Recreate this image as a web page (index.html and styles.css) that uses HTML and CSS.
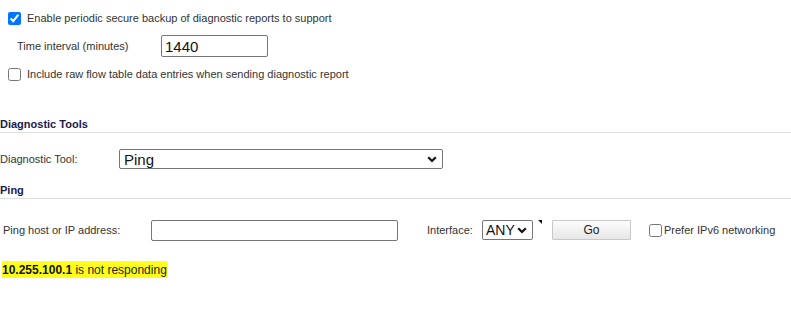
FILE: index.html
```html
<!DOCTYPE html>
<html lang="en">
<head>
    <meta charset="UTF-8">
    <meta name="viewport" content="width=device-width, initial-scale=1.0">
    <title>Diagnostics</title>
    <link rel="stylesheet" href="styles.css">
</head>
<body>
    <div class="backup">
        <label class="check-row">
            <input type="checkbox" checked>
            <span>Enable periodic secure backup of diagnostic reports to support</span>
        </label>
        <div class="field-row">
            <span class="interval-label">Time interval (minutes)</span>
            <input type="text" class="interval" value="1440">
        </div>
        <label class="check-row">
            <input type="checkbox">
            <span>Include raw flow table data entries when sending diagnostic report</span>
        </label>
    </div>

    <h2 class="section">Diagnostic Tools</h2>
    <div class="tool-row">
        <span class="tool-label">Diagnostic Tool:</span>
        <select class="tool-select">
            <option>Ping</option>
            <option>Trace Route</option>
            <option>DNS Name Lookup</option>
        </select>
    </div>

    <h2 class="section ping-title">Ping</h2>
    <div class="ping-row">
        <span class="host-label">Ping host or IP address:</span>
        <input type="text" class="host">
        <span class="iface-label">Interface:</span>
        <select class="iface">
            <option>ANY</option>
            <option>X0</option>
            <option>X1</option>
        </select>
        <span class="mark"></span>
        <button class="go-btn">Go</button>
        <label class="ipv6">
            <input type="checkbox">
            <span>Prefer IPv6 networking</span>
        </label>
    </div>

    <div class="result">
        <span class="highlight"><b>10.255.100.1</b> is not responding</span>
    </div>
</body>
</html>
```

FILE: styles.css
```css
/* General Styling */
body {
    margin: 0;
    font-family: "Liberation Sans", Arial, sans-serif;
    font-size: 11px;
    color: #333;
    background: white;
}

input[type="checkbox"] {
    width: 13px;
    height: 13px;
    margin: 0;
}

/* Backup settings */
.backup {
    padding-top: 4px;
}

.check-row {
    display: flex;
    align-items: center;
    height: 28px;
    padding-left: 8px;
    gap: 6px;
}

.field-row {
    display: flex;
    align-items: center;
    height: 28px;
}

.interval-label {
    width: 144px;
    padding-left: 17px;
}

.interval {
    width: 107px;
    height: 22px;
    box-sizing: border-box;
    border: 1px solid #767676;
    border-radius: 2px;
    padding: 0 3px;
    font-family: "Liberation Sans", Arial, sans-serif;
    font-size: 15px;
    color: #111;
}

/* Section headings */
.section {
    margin: 29px 0 0;
    font-size: 11px;
    line-height: 15px;
    font-weight: bold;
    color: #1b1b4d;
    border-bottom: 1px solid #dedede;
}

.ping-title {
    margin-top: 14px;
}

.tool-row {
    display: flex;
    align-items: center;
    height: 20px;
    margin-top: 16px;
}

.tool-label {
    width: 119px;
}

.tool-select,
.iface {
    height: 20px;
    box-sizing: border-box;
    border: 1px solid #767676;
    border-radius: 2px;
    font-family: "Liberation Sans", Arial, sans-serif;
    font-size: 15px;
    color: #111;
    background: white url("data:image/svg+xml,%3Csvg xmlns='http://www.w3.org/2000/svg' width='10' height='7' viewBox='0 0 10 7'%3E%3Cpath d='M1.2 1.2 L5 5 L8.8 1.2' fill='none' stroke='%23111' stroke-width='2.2'/%3E%3C/svg%3E") no-repeat right 5px center;
    appearance: none;
    -webkit-appearance: none;
    padding: 0 0 0 4px;
}

.tool-select {
    width: 324px;
    padding-left: 4px;
}

/* Ping row */
.ping-row {
    display: flex;
    align-items: center;
    height: 22px;
    margin-top: 20px;
}

.host-label {
    width: 148px;
    padding-left: 3px;
}

.host {
    width: 247px;
    height: 21px;
    box-sizing: border-box;
    border: 1px solid #767676;
    border-radius: 2px;
}

.iface-label {
    margin-left: 29px;
    width: 55px;
}

.iface {
    width: 51px;
    padding-left: 3px;
    font-size: 14px;
    background-position: right 5px center;
}

.mark {
    align-self: flex-start;
    margin: 1px 0 0 5px;
    width: 0;
    height: 0;
    border-top: 4px solid #111;
    border-left: 4px solid transparent;
}

.go-btn {
    margin-left: 10px;
    width: 79px;
    height: 20px;
    border: 1px solid #c8c8c8;
    border-radius: 1px;
    background: linear-gradient(#fdfdfd, #e6e6e6);
    font-family: "Liberation Sans", Arial, sans-serif;
    font-size: 12px;
    color: #222;
}

.ipv6 {
    display: flex;
    align-items: center;
    margin-left: 18px;
    gap: 2px;
}

/* Result */
.result {
    margin-top: 21px;
    padding-left: 2px;
    font-size: 12px;
    line-height: 16px;
}

.highlight {
    background: #ffff1a;
    color: #222;
    padding: 2px 0 3px;
}

.highlight b {
    color: #111;
}
```
